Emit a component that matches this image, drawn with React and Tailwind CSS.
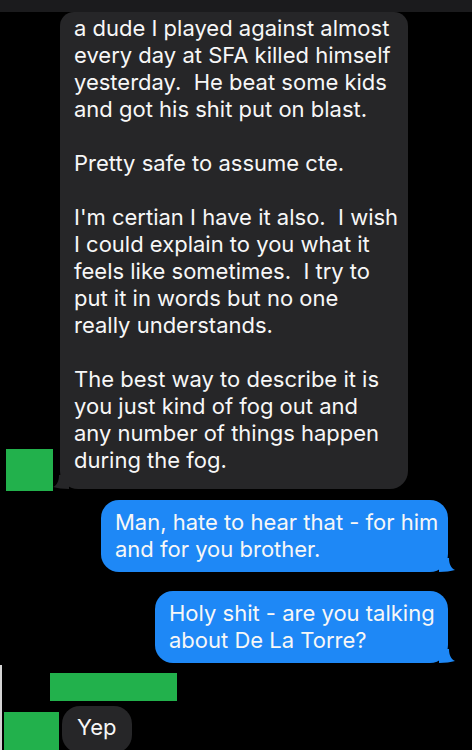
import React from 'react';

const grayLines = [
  'a dude I played against almost',
  'every day at SFA killed himself',
  'yesterday.  He beat some kids',
  'and got his shit put on blast.',
  '',
  'Pretty safe to assume cte.',
  '',
  "I'm certian I have it also.  I wish",
  'I could explain to you what it',
  'feels like sometimes.  I try to',
  'put it in words but no one',
  'really understands.',
  '',
  'The best way to describe it is',
  'you just kind of fog out and',
  'any number of things happen',
  'during the fog.',
];

const LeftTail = ({ color }) => (
  <svg className="absolute -left-[7px] bottom-0" width="16" height="14" viewBox="0 0 16 14">
    <path d="M16 0 L16 14 C10 14 4 13 0 12 C4 10 6 6 6 0 Z" fill={color} />
  </svg>
);

const RightTail = ({ color }) => (
  <svg className="absolute -right-[7px] bottom-0" width="16" height="14" viewBox="0 0 16 14">
    <path d="M0 0 L0 14 C6 14 12 13 16 12 C12 10 10 6 10 0 Z" fill={color} />
  </svg>
);

const BlueBubble = ({ lines, className }) => (
  <div className={`relative self-end mr-[24px] rounded-[18px] bg-[#1e88f6] pl-[14px] pr-[14px] py-[9px] ${className}`}>
    {lines.map((l, i) => (
      <div key={i} className="whitespace-pre leading-[27px]">{l}</div>
    ))}
    <RightTail color="#1e88f6" />
  </div>
);

export default function App() {
  return (
    <div
      className="w-[472px] h-[750px] overflow-hidden bg-black text-[#f7f7f7] text-[22px] flex flex-col"
      style={{ fontFamily: 'Inter, "Liberation Sans", Arial, sans-serif' }}
    >
      <div className="h-[12px] shrink-0 bg-[#1b1b1d]" />

      <div className="flex items-end">
        <div className="ml-[6px] mb-[-2px] w-[47px] h-[42px] bg-[#22b14c]" />
        <div className="relative ml-[7px] w-[348px] rounded-[18px] rounded-t-[14px] bg-[#262628] pl-[14px] pt-[3px] pb-[15px]">
          {grayLines.map((l, i) => (
            <div key={i} className="whitespace-pre leading-[27px] h-[27px]">{l}</div>
          ))}
          <LeftTail color="#262628" />
        </div>
      </div>

      <BlueBubble className="mt-[11px] w-[347px]" lines={['Man, hate to hear that - for him', 'and for you brother.']} />
      <BlueBubble className="mt-[19px] w-[293px]" lines={['Holy shit - are you talking', 'about De La Torre?']} />

      <div className="mt-[2px] flex-1 border-l-2 border-[#d4d4d4] flex flex-col">
        <div className="ml-[48px] mt-[8px] w-[127px] h-[28px] bg-[#22b14c]" />
        <div className="mt-[5px] flex items-start">
          <div className="ml-[2px] mt-[6px] w-[55px] h-[40px] bg-[#22b14c]" />
          <div className="ml-[3px] rounded-[18px] bg-[#262628] pl-[15px] pr-[15px] pt-[8px] pb-[12px] leading-[27px]">
            Yep
          </div>
        </div>
      </div>
    </div>
  );
}
